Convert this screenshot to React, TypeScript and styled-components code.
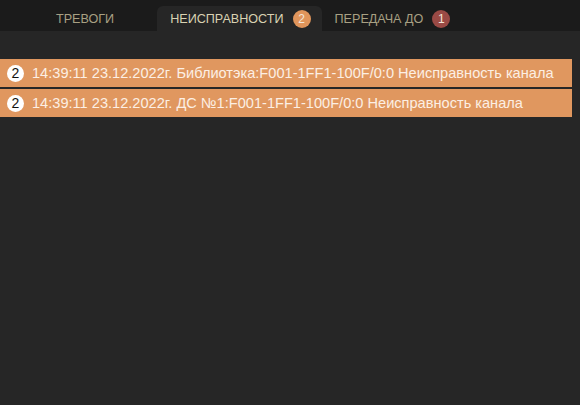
import styled, { createGlobalStyle } from 'styled-components';

const GlobalStyle = createGlobalStyle`
  html, body {
    margin: 0;
    padding: 0;
    background: #262626;
  }
  body {
    font-family: "Liberation Sans", Arial, sans-serif;
  }
`;

const Page = styled.div`
  width: 580px;
  height: 405px;
  background: #262626;
  display: flex;
  flex-direction: column;
`;

const TabBar = styled.div`
  height: 31px;
  background: #1b1b1b;
  display: flex;
  align-items: flex-end;
  padding-left: 43px;
  box-sizing: border-box;
`;

const Tab = styled.div<{ $active?: boolean; $spaced?: boolean }>`
  height: 25px;
  display: flex;
  align-items: center;
  gap: 9px;
  padding: 1px 11px 0 13px;
  margin-right: ${(p) => (p.$spaced ? '32px' : '0')};
  border-radius: 6px 6px 0 0;
  background: ${(p) => (p.$active ? '#262626' : 'transparent')};
  color: ${(p) => (p.$active ? '#d9d2b2' : '#a8a083')};
  font-size: 12.6px;
  box-sizing: border-box;
`;

const Badge = styled.span<{ $color: string }>`
  width: 18px;
  height: 18px;
  border-radius: 50%;
  background: ${(p) => p.$color};
  color: #f3e6da;
  font-size: 12px;
  display: flex;
  align-items: center;
  justify-content: center;
`;

const List = styled.div`
  display: flex;
  flex-direction: column;
  gap: 2px;
  padding: 28px 8px 0 0;
`;

const Row = styled.div`
  height: 28px;
  background: #e0975f;
  display: flex;
  align-items: center;
  padding-left: 7px;
  gap: 8px;
  color: #fcefe4;
  font-size: 14.6px;
`;

const Count = styled.span`
  width: 17px;
  height: 17px;
  border-radius: 50%;
  background: #ffffff;
  color: #111;
  font-size: 14px;
  display: flex;
  align-items: center;
  justify-content: center;
`;

const tabs = [
  { title: 'ТРЕВОГИ' },
  { title: 'НЕИСПРАВНОСТИ', count: 2, color: '#e0955b', active: true },
  { title: 'ПЕРЕДАЧА ДО', count: 1, color: '#9a4a45' },
];

const faults = [
  '14:39:11 23.12.2022г. Библиотэка:F001-1FF1-100F/0:0 Неисправность канала',
  '14:39:11 23.12.2022г. ДС №1:F001-1FF1-100F/0:0 Неисправность канала',
];

export default function App() {
  return (
    <Page>
      <GlobalStyle />
      <TabBar>
        {tabs.map((t, i) => (
          <Tab key={t.title} $active={t.active} $spaced={i === 0}>
            {t.title}
            {t.count && <Badge $color={t.color!}>{t.count}</Badge>}
          </Tab>
        ))}
      </TabBar>
      <List>
        {faults.map((f) => (
          <Row key={f}>
            <Count>2</Count>
            {f}
          </Row>
        ))}
      </List>
    </Page>
  );
}
